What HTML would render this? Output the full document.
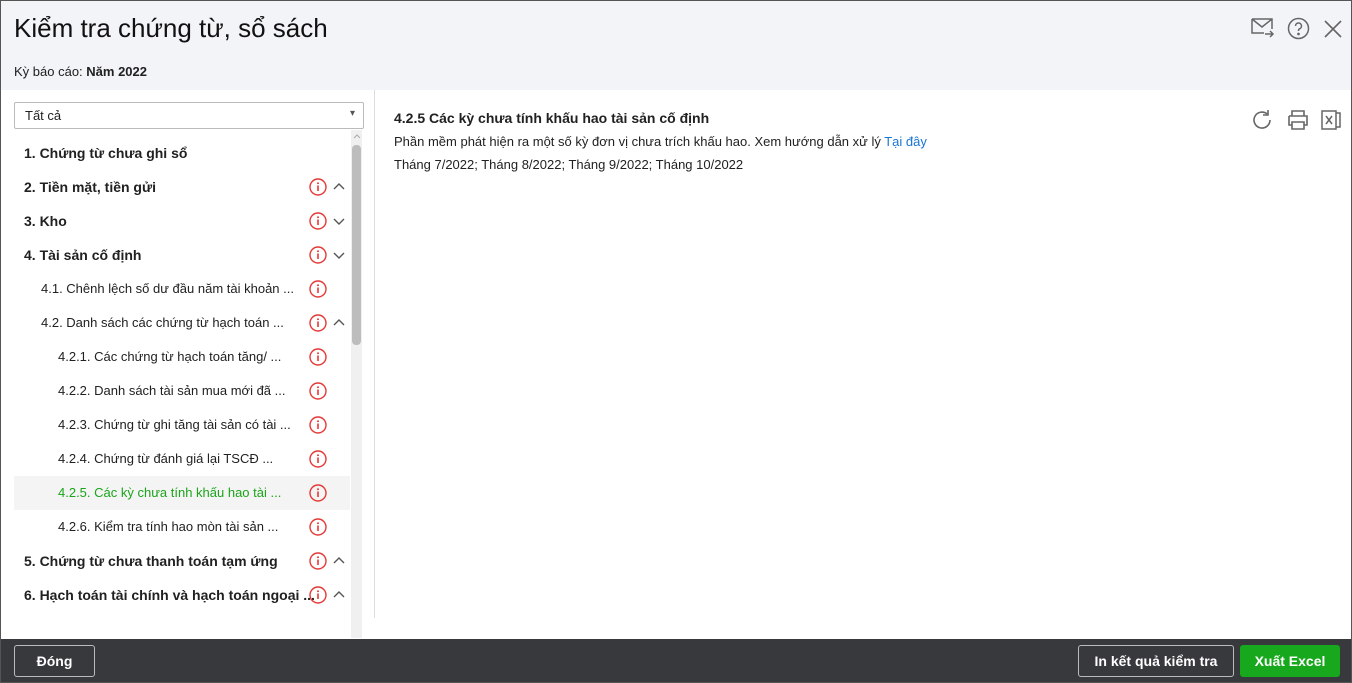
<!DOCTYPE html><html><head><meta charset="utf-8"><style>
*{box-sizing:border-box;margin:0;padding:0}
body{width:1352px;height:683px;overflow:hidden;font-family:"Liberation Sans",sans-serif;background:#fff;position:relative;color:#212121}
.win{position:absolute;inset:0;border:1px solid #555;z-index:5;pointer-events:none}
.hdr{position:absolute;left:1px;top:1px;right:1px;height:89px;background:#f3f4f8}
.t{position:absolute;left:13px;top:12px;font-size:26px;color:#111}
.k{position:absolute;left:13px;top:63px;font-size:13px}
.sel{position:absolute;left:14px;top:102px;width:350px;height:27px;border:1px solid #bbb;border-radius:2px;font-size:13px;padding:5px 10px}
.sel:after{content:"▾";position:absolute;right:8px;top:5px;font-size:10px;color:#555}
.row{position:absolute;left:14px;width:336px;height:34px;font-size:14px;line-height:34px;white-space:nowrap}
.row.b{font-weight:bold}
.ic{position:absolute;left:295px;top:8px;width:18px;height:18px}
.ch{position:absolute;left:319px;top:12px;width:12px;height:10px}
.sb{position:absolute;left:351px;top:130px;width:11px;height:508px;background:#f0f0f0}
.th{position:absolute;left:352px;top:145px;width:9px;height:200px;background:#bdbdbd;border-radius:4px}
.div{position:absolute;left:374px;top:90px;width:1px;height:528px;background:#ddd}
.ft{position:absolute;left:1px;right:1px;bottom:1px;height:43px;background:#38393d}
.btn{position:absolute;top:6px;height:32px;border:1px solid #bbb;background:transparent;color:#fff;font-size:14px;font-weight:bold;text-align:center;line-height:30px;border-radius:3px}
</style></head><body><div class="win"></div>
<svg width="0" height="0" style="position:absolute"><defs>
<symbol id="i" viewBox="0 0 18 18"><circle cx="9" cy="9" r="8" fill="none" stroke="#e53935" stroke-width="1.4"/><circle cx="9" cy="5.3" r="1" fill="#e53935"/><path d="M9 7.5v5.5" stroke="#e53935" stroke-width="1.6"/></symbol>
<symbol id="u" viewBox="0 0 12 10"><path d="M1 7l5-5 5 5" fill="none" stroke="#555" stroke-width="1.4"/></symbol>
<symbol id="d" viewBox="0 0 12 10"><path d="M1 3l5 5 5-5" fill="none" stroke="#555" stroke-width="1.4"/></symbol>
</defs></svg>
<div class="hdr"><div class="t">Kiểm tra chứng từ, sổ sách</div><div class="k">Kỳ báo cáo: <b>Năm 2022</b></div>
<svg style="position:absolute;left:1250px;top:16px" width="24" height="22" fill="none" stroke="#666" stroke-width="1.5"><path d="M1 2h20v10M1 2v14h12M1 2l10 8 10-8M14 17h8M19 14l3 3-3 3"/></svg>
<svg style="position:absolute;left:1286px;top:16px" width="23" height="23" fill="none" stroke="#666" stroke-width="1.5"><circle cx="11.5" cy="11.5" r="10"/><path d="M8.5 9a3 3 0 1 1 4 2.8c-1 .4-1 1-1 2.2"/><circle cx="11.5" cy="17" r=".6" fill="#666"/></svg>
<svg style="position:absolute;left:1322px;top:18px" width="20" height="20" stroke="#666" stroke-width="1.6"><path d="M2 2l16 16M18 2L2 18"/></svg>
</div>
<div class="sel">Tất cả</div>
<div class="row b" style="top:136px;padding-left:10px">1. Chứng từ chưa ghi sổ</div>
<div class="row b" style="top:170px;padding-left:10px">2. Tiền mặt, tiền gửi<svg class="ic"><use href="#i"/></svg><svg class="ch"><use href="#u"/></svg></div>
<div class="row b" style="top:204px;padding-left:10px">3. Kho<svg class="ic"><use href="#i"/></svg><svg class="ch"><use href="#d"/></svg></div>
<div class="row b" style="top:238px;padding-left:10px">4. Tài sản cố định<svg class="ic"><use href="#i"/></svg><svg class="ch"><use href="#d"/></svg></div>
<div class="row" style="top:272px;padding-left:27px;font-size:13px">4.1. Chênh lệch số dư đầu năm tài khoản ...<svg class="ic"><use href="#i"/></svg></div>
<div class="row" style="top:306px;padding-left:27px;font-size:13px">4.2. Danh sách các chứng từ hạch toán ...<svg class="ic"><use href="#i"/></svg><svg class="ch"><use href="#u"/></svg></div>
<div class="row" style="top:340px;padding-left:44px;font-size:13px">4.2.1. Các chứng từ hạch toán tăng/ ...<svg class="ic"><use href="#i"/></svg></div>
<div class="row" style="top:374px;padding-left:44px;font-size:13px">4.2.2. Danh sách tài sản mua mới đã ...<svg class="ic"><use href="#i"/></svg></div>
<div class="row" style="top:408px;padding-left:44px;font-size:13px">4.2.3. Chứng từ ghi tăng tài sản có tài ...<svg class="ic"><use href="#i"/></svg></div>
<div class="row" style="top:442px;padding-left:44px;font-size:13px">4.2.4. Chứng từ đánh giá lại TSCĐ ...<svg class="ic"><use href="#i"/></svg></div>
<div class="row" style="top:476px;padding-left:44px;font-size:13px;background:#f4f4f4;color:#1aa51a">4.2.5. Các kỳ chưa tính khấu hao tài ...<svg class="ic"><use href="#i"/></svg></div>
<div class="row" style="top:510px;padding-left:44px;font-size:13px">4.2.6. Kiểm tra tính hao mòn tài sản ...<svg class="ic"><use href="#i"/></svg></div>
<div class="row b" style="top:544px;padding-left:10px">5. Chứng từ chưa thanh toán tạm ứng<svg class="ic"><use href="#i"/></svg><svg class="ch"><use href="#u"/></svg></div>
<div class="row b" style="top:578px;padding-left:10px">6. Hạch toán tài chính và hạch toán ngoại ...<svg class="ic"><use href="#i"/></svg><svg class="ch"><use href="#u"/></svg></div>
<div class="sb"></div><div class="th"></div><div class="div"></div>
<svg style="position:absolute;left:353px;top:133px" width="8" height="6"><path d="M1 5l3-3 3 3" fill="none" stroke="#aaa"/></svg>
<div style="position:absolute;left:394px;top:110px;font-size:14px;font-weight:bold">4.2.5 Các kỳ chưa tính khấu hao tài sản cố định</div>
<div style="position:absolute;left:394px;top:134px;font-size:13px">Phần mềm phát hiện ra một số kỳ đơn vị chưa trích khấu hao. Xem hướng dẫn xử lý <span style="color:#1976d2">Tại đây</span></div>
<div style="position:absolute;left:394px;top:157px;font-size:13px">Tháng 7/2022; Tháng 8/2022; Tháng 9/2022; Tháng 10/2022</div>
<svg style="position:absolute;left:1251px;top:109px" width="22" height="22" fill="none" stroke="#666" stroke-width="1.6"><path d="M19 11a8 8 0 1 1-3-6.2M17 1v5h-5"/></svg>
<svg style="position:absolute;left:1287px;top:109px" width="22" height="22" fill="none" stroke="#666" stroke-width="1.6"><path d="M5 7V2h12v5M2 7h18v9h-3M5 16H2V7M5 13h12v7H5z"/></svg>
<svg style="position:absolute;left:1320px;top:109px" width="22" height="22" fill="none" stroke="#666" stroke-width="1.5"><path d="M2 2h14v18H2zM16 4h4v14h-4M6 7l6 8M12 7l-6 8"/></svg>
<div class="ft"><div class="btn" style="left:13px;width:81px">Đóng</div>
<div class="btn" style="left:1077px;width:156px">In kết quả kiểm tra</div>
<div class="btn" style="left:1239px;width:100px;background:#17a81d;border-color:#17a81d;color:#fff">Xuất Excel</div></div>
</body></html>
